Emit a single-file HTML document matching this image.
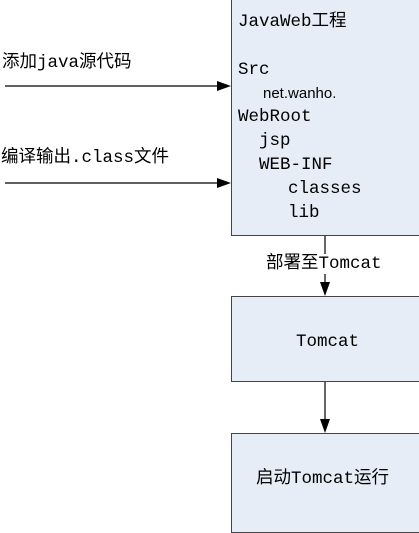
<!DOCTYPE html>
<html><head><meta charset="utf-8"><style>
body{margin:0;width:419px;height:518px;background:#fff;position:relative;overflow:hidden;font-family:"Liberation Mono","Noto Sans CJK SC",monospace;font-size:17.5px;color:#000}
.b{position:absolute;left:231px;width:200px;background:#e6edf7;border:1.5px solid #444;box-sizing:border-box}
.t{position:absolute;white-space:nowrap;line-height:20px}
</style></head><body>
<div class="b" style="top:-2px;height:238px"></div>
<div class="b" style="top:296px;height:86px"></div>
<div class="b" style="top:433px;height:100px"></div>
<svg width="419" height="518" style="position:absolute;left:0;top:0">
<g stroke="#000" stroke-width="1.2">
<line x1="5" y1="86" x2="222" y2="86"/><line x1="5" y1="183" x2="222" y2="183"/>
<line x1="325" y1="236" x2="325" y2="286"/><line x1="325" y1="382" x2="325" y2="423"/>
</g>
<polygon points="231,86 217,81 217,91"/><polygon points="231,183 217,178 217,188"/>
<polygon points="325,296 320,282 330,282"/><polygon points="325,433 320,419 330,419"/>
</svg>
<div class="t" style="left:238px;top:12px">JavaWeb工程</div>
<div class="t" style="left:238px;top:60px">Src</div>
<div class="t" style="left:263px;top:84px;font-family:'Liberation Sans',sans-serif;font-size:15px">net.wanho.</div>
<div class="t" style="left:238px;top:107px">WebRoot</div>
<div class="t" style="left:259px;top:131px">jsp</div>
<div class="t" style="left:259px;top:155px">WEB-INF</div>
<div class="t" style="left:288px;top:179px">classes</div>
<div class="t" style="left:288px;top:203px">lib</div>
<div class="t" style="left:2px;top:53px">添加java源代码</div>
<div class="t" style="left:1px;top:148px">编译输出.class文件</div>
<div class="t" style="left:266px;top:254px;background:#fff">部署至Tomcat</div>
<div class="t" style="left:296px;top:332px">Tomcat</div>
<div class="t" style="left:256px;top:469px">启动Tomcat运行</div>
</body></html>
